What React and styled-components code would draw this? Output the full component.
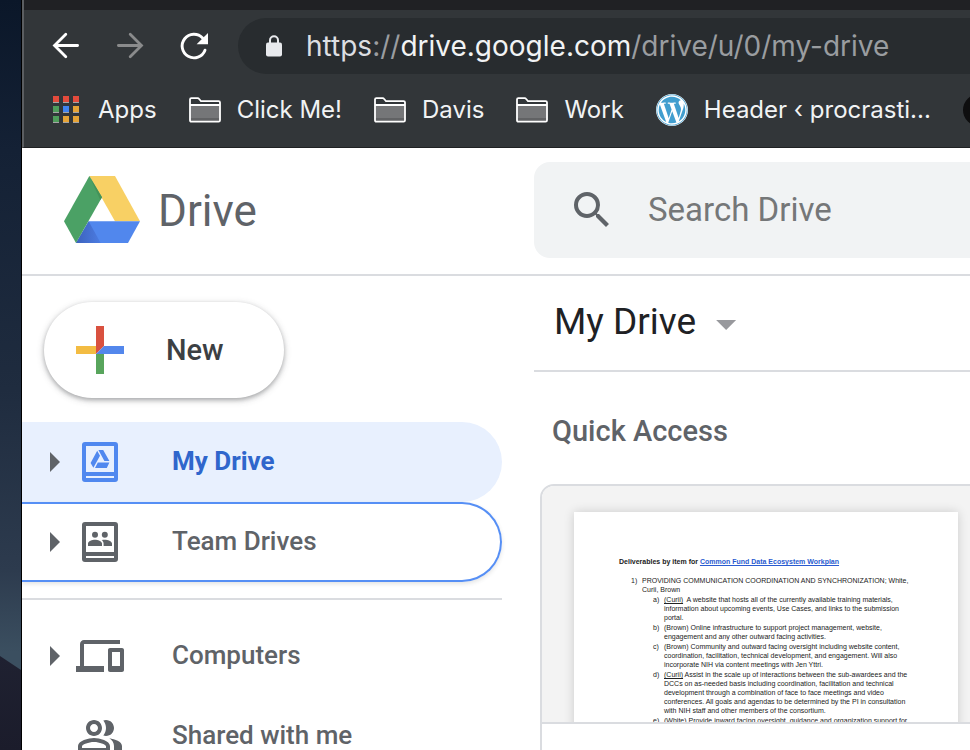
import React from "react";
import styled, { createGlobalStyle, css } from "styled-components";
import { FaWordpress } from "react-icons/fa";

const sans = 'Roboto, "Liberation Sans", sans-serif';
const system = 'Inter, "Liberation Sans", sans-serif';

const GlobalStyle = createGlobalStyle`
  *, *::before, *::after { box-sizing: border-box; }
  body { margin: 0; background: #fff; font-family: ${sans}; overflow: hidden; }
  button, input { font: inherit; color: inherit; border: 0; padding: 0; background: none; }
  button { cursor: pointer; white-space: nowrap; }
  svg { display: block; flex: none; }
  a { color: inherit; text-decoration: none; }
`;

const Desktop = styled.div`
  display: flex;
  height: 100vh;
  overflow: hidden;
`;

const Wallpaper = styled.div`
  flex: none;
  width: 22px;
  display: flex;
  flex-direction: column;
  justify-content: flex-end;
  border-right: 1px solid #000;
  background: linear-gradient(#0b1729 0%, #142135 20%, #1f2c3f 52%, #2d3b4e 76%, #3b4f60 87%);
`;

const Ridge = styled.div`
  height: 94px;
  background: linear-gradient(#1f2131, #1b1c2b);
  clip-path: polygon(0 0, 100% 14px, 100% 100%, 0 100%);
`;

const Browser = styled.div`
  flex: 1;
  min-width: 0;
  display: flex;
  flex-direction: column;
  background: #fff;
`;

const Chrome = styled.header`
  flex: none;
  background: #323639;
  border-left: 2px solid #5b5e61;
  border-bottom: 1px solid #1f2123;
  font-family: ${system};
`;

const TabStrip = styled.div`
  height: 10px;
  background: #202124;
`;

const Toolbar = styled.div`
  display: flex;
  align-items: center;
  padding: 8px 0 8px 26px;
`;

const ToolButton = styled.button`
  flex: none;
  display: grid;
  place-items: center;
  width: 32px;
  height: 32px;
  margin-right: 32px;
  color: ${(p) => (p.$dim ? "#8a8b8c" : "#fff")};
`;

const Omnibox = styled.div`
  flex: 1;
  min-width: 0;
  height: 56px;
  margin-left: -4px;
  padding-left: 28px;
  display: flex;
  align-items: center;
  gap: 24px;
  border-radius: 28px 0 0 28px;
  background: #282c2f;
`;

const Address = styled.div`
  flex: 1;
  min-width: 0;
  overflow: hidden;
  white-space: nowrap;
  font-family: ${system};
  font-size: 28px;
  line-height: 36px;
  color: #9a9da0;
  outline: none;
`;

const Scheme = styled.span`
  color: #dcdee2;
`;

const Host = styled.span`
  color: #f1f3f4;
`;

const Bookmarks = styled.nav`
  display: flex;
  align-items: center;
  gap: 32px;
  height: 65px;
  padding: 0 0 9px 26px;
  overflow: hidden;
`;

const Bookmark = styled.button`
  flex: none;
  display: flex;
  align-items: center;
  gap: 16px;
  height: 40px;
  font-size: 24px;
  line-height: 32px;
  color: #f1f3f4;
`;

const IconSlot = styled.span`
  display: grid;
  place-items: center;
  width: 32px;
  height: 32px;
`;

const WordPressMark = styled(IconSlot)`
  border-radius: 50%;
  background: #fff;
  color: #419ecf;
`;

const DarkFavicon = styled(IconSlot)`
  border-radius: 50%;
  background: #0e0e0f;
`;

const AppHeader = styled.header`
  flex: none;
  display: grid;
  grid-template-columns: 512px 1fr;
  align-items: center;
  height: 128px;
  border-bottom: 2px solid #dadce0;
`;

const Brand = styled.a`
  display: flex;
  align-items: flex-start;
  gap: 18px;
  padding-left: 42px;
  font-size: 44px;
  line-height: 70px;
  color: #5f6368;
`;

const SearchBox = styled.form`
  display: flex;
  align-items: center;
  gap: 32px;
  height: 96px;
  padding-left: 34px;
  margin-bottom: 2px;
  border-radius: 16px 0 0 16px;
  background: #f1f3f4;
`;

const SearchButton = styled.button`
  display: grid;
  place-items: center;
  color: #5f6368;
`;

const SearchInput = styled.input`
  flex: 1;
  min-width: 0;
  height: 48px;
  margin-bottom: 2px;
  font-size: 33px;
  outline: none;
  color: #202124;
  &::placeholder { color: #757778; opacity: 1; }
`;

const Body = styled.div`
  flex: 1;
  min-height: 0;
  display: grid;
  grid-template-columns: 512px 1fr;
  overflow: hidden;
`;

const Sidebar = styled.aside`
  padding-top: 26px;
  padding-right: 32px;
`;

const NewButton = styled.button`
  display: flex;
  align-items: center;
  gap: 42px;
  width: 240px;
  height: 96px;
  margin: 0 0 24px 22px;
  padding-left: 32px;
  border-radius: 48px;
  background: #fff;
  box-shadow: 0 2px 4px rgba(60, 64, 67, 0.35), 0 2px 7px 1px rgba(60, 64, 67, 0.16);
  font-size: 29px;
  font-weight: 500;
  color: #3c4043;
`;

const NavItem = styled.button`
  display: flex;
  align-items: center;
  width: 100%;
  height: 80px;
  padding-left: 28px;
  border-radius: 0 40px 40px 0;
  font-size: 26px;
  font-weight: 500;
  line-height: 32px;
  color: #5f6368;
  ${(p) =>
    p.$selected &&
    css`
      background: #e8f0fe;
      color: #2f66cc;
      font-weight: 700;
    `}
  ${(p) =>
    p.$focused &&
    css`
      border: solid #568ff5;
      border-width: 2px 2px 2px 0;
      box-shadow: 0 2px 4px rgba(60, 64, 67, 0.14);
    `}
`;

const NavGlyph = styled.span`
  margin: 0 48px 0 16px;
  color: ${(p) => (p.$selected ? "#5088ef" : "inherit")};
`;

const NavLabel = styled.span`
  padding-bottom: 2px;
`;

const Expander = styled.span`
  width: 10px;
  height: 20px;
  background: ${(p) => (p.$hidden ? "none" : "#5f6368")};
  clip-path: polygon(0 0, 100% 50%, 0 100%);
`;

const NavRule = styled.hr`
  height: 2px;
  margin: 16px 0;
  border: 0;
  background: #dadce0;
`;

const Main = styled.main`
  min-width: 0;
  overflow: hidden;
`;

const PathBar = styled.div`
  height: 96px;
  padding: 22px 0 0 20px;
  border-bottom: 2px solid #dadce0;
`;

const PathButton = styled.button`
  display: flex;
  align-items: center;
  gap: 20px;
  height: 48px;
  font-size: 37px;
  line-height: 48px;
  color: #202124;
`;

const Caret = styled.span`
  width: 20px;
  height: 10px;
  margin-top: 6px;
  background: #98999d;
  clip-path: polygon(0 0, 100% 0, 50% 100%);
`;

const SectionTitle = styled.h2`
  margin: 0;
  padding: 40px 0 34px 18px;
  font-size: 29px;
  font-weight: 500;
  line-height: 38px;
  color: #5f6368;
`;

const FileCard = styled.article`
  width: 452px;
  height: 320px;
  margin-left: 6px;
  overflow: hidden;
  border: 2px solid #dadce0;
  border-radius: 14px;
`;

const Preview = styled.div`
  height: 238px;
  padding: 26px 32px 0;
  overflow: hidden;
  border-bottom: 2px solid #dadce0;
  background: #f3f3f3;
`;

const Paper = styled.div`
  height: 480px;
  padding: 45px 0 0 45px;
  background: #fff;
  box-shadow: 0 0 10px rgba(0, 0, 0, 0.16);
  font-family: "Liberation Sans", sans-serif;
  font-size: 7px;
  line-height: 9px;
  color: #222;
  white-space: nowrap;
`;

const DocTitle = styled.p`
  margin: 0 0 10px;
  font-weight: 700;
`;

const DocLink = styled.a`
  color: #2a5bd0;
  text-decoration: underline;
`;

const DocList = styled.ol`
  display: grid;
  gap: 1px;
  margin: 0;
  padding: 0;
  list-style: none;
`;

const DocItem = styled.li`
  display: grid;
  grid-template-columns: 11px 1fr;
  padding-left: ${(p) => (p.$nested ? 34 : 12)}px;
`;

const Svg = ({ w, h = w, box = `0 0 ${w} ${h}`, children }) => (
  <svg width={w} height={h} viewBox={box} aria-hidden="true">
    {children}
  </svg>
);

const ArrowIcon = ({ forward }) => (
  <Svg w={32}>
    <path
      d={forward ? "M4.400 15.500h23M16.200 4.200L27.500 15.500L16.200 26.800" : "M27.600 15.500H4.600M15.800 4.200L4.500 15.500L15.800 26.800"}
      fill="none"
      stroke="currentColor"
      strokeWidth="2.8"
      strokeLinecap="round"
    />
  </Svg>
);

const ReloadIcon = () => (
  <Svg w={32}>
    <path d="M27 20.2A11.8 11.8 0 1 1 24.6 8" fill="none" stroke="currentColor" strokeWidth="2.9" strokeLinecap="round" />
    <path d="M30 3v11.2H18.6z" fill="currentColor" />
  </Svg>
);

const LockIcon = () => (
  <Svg w={16} h={22}>
    <rect y="7.5" width="16" height="14" rx="2" fill="#e8eaed" />
    <path d="M4 9V5.2a4 4 0 0 1 8 0V9" fill="none" stroke="#e8eaed" strokeWidth="2" />
  </Svg>
);

const appColors = ["#e34b3c", "#e34b3c", "#e34b3c", "#4f9d5b", "#3f83f0", "#e6a436", "#4f9d5b", "#e6a436", "#e6a436"];

const AppsIcon = () => (
  <Svg w={26} h={28}>
    {appColors.map((color, i) => (
      <g key={i} transform={`translate(${(i % 3) * 10} ${Math.floor(i / 3) * 10})`}>
        <rect width="6" height="7" fill="#a5a5a5" />
        <rect width="6" height="6" fill={color} />
      </g>
    ))}
  </Svg>
);

const FolderIcon = () => (
  <Svg w={32} h={26}>
    <rect x="1" y="8" width="30" height="16" fill="#757678" />
    <rect x="1" y="21" width="30" height="3" fill="#616264" />
    <path
      d="M1 23.2V2.6Q1 1.2 2.4 1.2H8.6Q9.6 1.2 10.2 2L12 4.2H29.6Q31 4.2 31 5.6V23.2Q31 24.6 29.6 24.6H2.4Q1 24.6 1 23.2ZM1 8H31"
      fill="none"
      stroke="#fff"
      strokeWidth="1.8"
    />
  </Svg>
);

const DriveLogo = () => (
  <Svg w={76} h={67} box="0 0 228 201">
    <defs>
      <linearGradient id="fold" x1="0" y1="0" x2="1" y2="0">
        <stop offset="0" stopColor="#3c62bd" />
        <stop offset="1" stopColor="#4c7ce2" />
      </linearGradient>
    </defs>
    <path d="M76 0H153L228 136H153z" fill="#f8d064" />
    <path d="M74 136H228L192 201H36z" fill="#5187ed" />
    <path d="M74 136L110 201H36z" fill="url(#fold)" />
    <path d="M76 0L114 64L36 201L0 136z" fill="#4ba165" />
    <path d="M76 0L114 64L109 72z" fill="#449259" />
  </Svg>
);

const SearchIcon = () => (
  <Svg w={48} box="0 0 24 24">
    <path
      fill="currentColor"
      d="M15.5 14h-.79l-.28-.27A6.47 6.47 0 0 0 16 9.5 6.5 6.5 0 1 0 9.5 16c1.61 0 3.09-.59 4.23-1.57l.27.28v.79l5 4.99L20.49 19l-4.99-5zm-6 0C7.01 14 5 11.99 5 9.5S7.01 5 9.5 5 14 7.01 14 9.5 11.99 14 9.5 14z"
    />
  </Svg>
);

const PlusIcon = () => (
  <Svg w={48}>
    <path d="M20 0h8v20l-8 8z" fill="#d9513f" />
    <path d="M28 20h20v8H20z" fill="#5387ec" />
    <path d="M0 20h20v8H0z" fill="#f3bc42" />
    <path d="M20 28h8v20h-8z" fill="#58a55c" />
  </Svg>
);

const bookFrame =
  "M4.500 2H19.500A1.500 1.500 0 0 1 21 3.500V20.500A1.500 1.500 0 0 1 19.500 22H4.500A1.500 1.500 0 0 1 3 20.500V3.500A1.500 1.500 0 0 1 4.500 2ZM5 4V17H19V4ZM5 19V20H19V19Z";

const MyDriveIcon = () => (
  <Svg w={48} box="0 0 24 24">
    <path fill="currentColor" fillRule="evenodd" d={bookFrame} />
    <path fill="currentColor" d="M10.6 6.400L12 8.900L8.700 14.900L7.300 12.500zM11.200 6H13.600L16.700 11.500H14.200zM10.900 12.300H16.700L15.400 15H9.500z" />
  </Svg>
);

const TeamDrivesIcon = () => (
  <Svg w={48} box="0 0 24 24">
    <path fill="currentColor" fillRule="evenodd" d={bookFrame} />
    <circle cx="9.500" cy="8.400" r="1.500" fill="currentColor" />
    <circle cx="14.400" cy="8.400" r="1.500" fill="currentColor" />
    <path
      fill="currentColor"
      d="M6 14v-1.200c0-1.200 2.200-1.900 3.500-1.900s3.500.7 3.500 1.900V14zM13.800 14v-1.200c0-.7-.4-1.300-.9-1.800.5-.1 1-.1 1.500-.1 1.400 0 3.600.7 3.600 1.900V14z"
    />
  </Svg>
);

const ComputersIcon = () => (
  <Svg w={48} box="0 0 24 24">
    <path
      fill="currentColor"
      d="M4 6h18V4H4c-1.100 0-2 .9-2 2v11H0v3h14v-3H4V6zm19 2h-6c-.55 0-1 .45-1 1v10c0 .55.45 1 1 1h6c.55 0 1-.45 1-1V9c0-.55-.45-1-1-1zm-1 9h-4v-7h4v7z"
    />
  </Svg>
);

const SharedIcon = () => (
  <Svg w={48} box="0 0 24 24">
    <path
      fill="currentColor"
      d="M16.670 13.130C18.040 14.060 19 15.320 19 17v3h4v-3c0-2.180-3.570-3.470-6.330-3.870zM15 12c2.210 0 4-1.790 4-4s-1.790-4-4-4c-.47 0-.91.1-1.330.24C14.500 5.270 15 6.580 15 8s-.5 2.730-1.330 3.760c.42.14.86.24 1.330.24zM9 12c2.210 0 4-1.790 4-4s-1.790-4-4-4-4 1.790-4 4 1.790 4 4 4zm0-6c1.100 0 2 .9 2 2s-.9 2-2 2-2-.9-2-2 .9-2 2-2zM9 13c-2.670 0-8 1.340-8 4v3h16v-3c0-2.660-5.330-4-8-4zm6 5H3v-.99C3.200 16.290 6.300 15 9 15s5.800 1.290 6 2v1z"
    />
  </Svg>
);

const folders = ["Click Me!", "Davis", "Work"];

const places = [
  { label: "My Drive", Icon: MyDriveIcon, selected: true, expandable: true },
  { label: "Team Drives", Icon: TeamDrivesIcon, focused: true, expandable: true, ruleAfter: true },
  { label: "Computers", Icon: ComputersIcon, expandable: true },
  { label: "Shared with me", Icon: SharedIcon },
];

const docItems = [
  { mark: "1)", lines: ["PROVIDING COMMUNICATION COORDINATION AND SYNCHRONIZATION; White,", "Curii, Brown"] },
  {
    mark: "a)",
    who: "(Curii)",
    lines: [
      "\u00a0 A website that hosts all of the currently available training materials,",
      "information about upcoming events, Use Cases, and links to the submission",
      "portal.",
    ],
  },
  {
    mark: "b)",
    lines: ["(Brown) Online infrastructure to support project management, website,", "engagement and any other outward facing activities."],
  },
  {
    mark: "c)",
    lines: [
      "(Brown) Community and outward facing oversight including website content,",
      "coordination, facilitation, technical development, and engagement. Will also",
      "incorporate NIH via content meetings with Jen Yttri.",
    ],
  },
  {
    mark: "d)",
    who: "(Curii)",
    lines: [
      " Assist in the scale up of interactions between the sub-awardees and the",
      "DCCs on as-needed basis including coordination, facilitation and technical",
      "development through a combination of face to face meetings and video",
      "conferences. All goals and agendas to be determined by the PI in consultation",
      "with NIH staff and other members of the consortium.",
    ],
  },
  { mark: "e)", lines: ["(White) Provide inward facing oversight, guidance and organization support for"] },
];

const Place = ({ label, Icon, selected, focused, expandable }) => (
  <NavItem type="button" $selected={selected} $focused={focused} aria-current={selected ? "page" : undefined}>
    <Expander $hidden={!expandable} />
    <NavGlyph $selected={selected}>
      <Icon />
    </NavGlyph>
    <NavLabel>{label}</NavLabel>
  </NavItem>
);

export default function App() {
  return (
    <Desktop>
      <GlobalStyle />
      <Wallpaper>
        <Ridge />
      </Wallpaper>
      <Browser>
        <Chrome>
          <TabStrip />
          <Toolbar>
            <ToolButton type="button" aria-label="Back">
              <ArrowIcon />
            </ToolButton>
            <ToolButton type="button" aria-label="Forward" $dim>
              <ArrowIcon forward />
            </ToolButton>
            <ToolButton type="button" aria-label="Reload">
              <ReloadIcon />
            </ToolButton>
            <Omnibox>
              <LockIcon />
              <Address role="textbox" aria-label="Address" contentEditable suppressContentEditableWarning spellCheck={false}>
                <Scheme>https</Scheme>://<Host>drive.google.com</Host>/drive/u/0/my-drive
              </Address>
            </Omnibox>
          </Toolbar>
          <Bookmarks aria-label="Bookmarks">
            <Bookmark type="button">
              <IconSlot>
                <AppsIcon />
              </IconSlot>
              Apps
            </Bookmark>
            {folders.map((name) => (
              <Bookmark type="button" key={name}>
                <IconSlot>
                  <FolderIcon />
                </IconSlot>
                {name}
              </Bookmark>
            ))}
            <Bookmark type="button">
              <WordPressMark>
                <FaWordpress size={32} />
              </WordPressMark>
              Header ‹ procrasti...
            </Bookmark>
            <Bookmark type="button" aria-label="Bookmark">
              <DarkFavicon />
            </Bookmark>
          </Bookmarks>
        </Chrome>

        <AppHeader>
          <Brand href="#home">
            <DriveLogo />
            Drive
          </Brand>
          <SearchBox role="search">
            <SearchButton type="button" aria-label="Search">
              <SearchIcon />
            </SearchButton>
            <SearchInput type="text" aria-label="Search Drive" placeholder="Search Drive" />
          </SearchBox>
        </AppHeader>

        <Body>
          <Sidebar>
            <NewButton type="button">
              <PlusIcon />
              New
            </NewButton>
            {places.map((place) => (
              <React.Fragment key={place.label}>
                <Place {...place} />
                {place.ruleAfter && <NavRule />}
              </React.Fragment>
            ))}
          </Sidebar>

          <Main>
            <PathBar>
              <PathButton type="button">
                My Drive
                <Caret />
              </PathButton>
            </PathBar>
            <SectionTitle>Quick Access</SectionTitle>
            <FileCard>
              <Preview>
                <Paper>
                  <DocTitle>
                    Deliverables by item for <DocLink href="#workplan">Common Fund Data Ecosystem Workplan</DocLink>
                  </DocTitle>
                  <DocList>
                    {docItems.map(({ mark, who, lines }, i) => (
                      <DocItem key={mark} $nested={i > 0}>
                        <span>{mark}</span>
                        <span>
                          {who && <u>{who}</u>}
                          {lines.map((line, n) => (
                            <React.Fragment key={line}>
                              {n > 0 && <br />}
                              {line}
                            </React.Fragment>
                          ))}
                        </span>
                      </DocItem>
                    ))}
                  </DocList>
                </Paper>
              </Preview>
            </FileCard>
          </Main>
        </Body>
      </Browser>
    </Desktop>
  );
}
